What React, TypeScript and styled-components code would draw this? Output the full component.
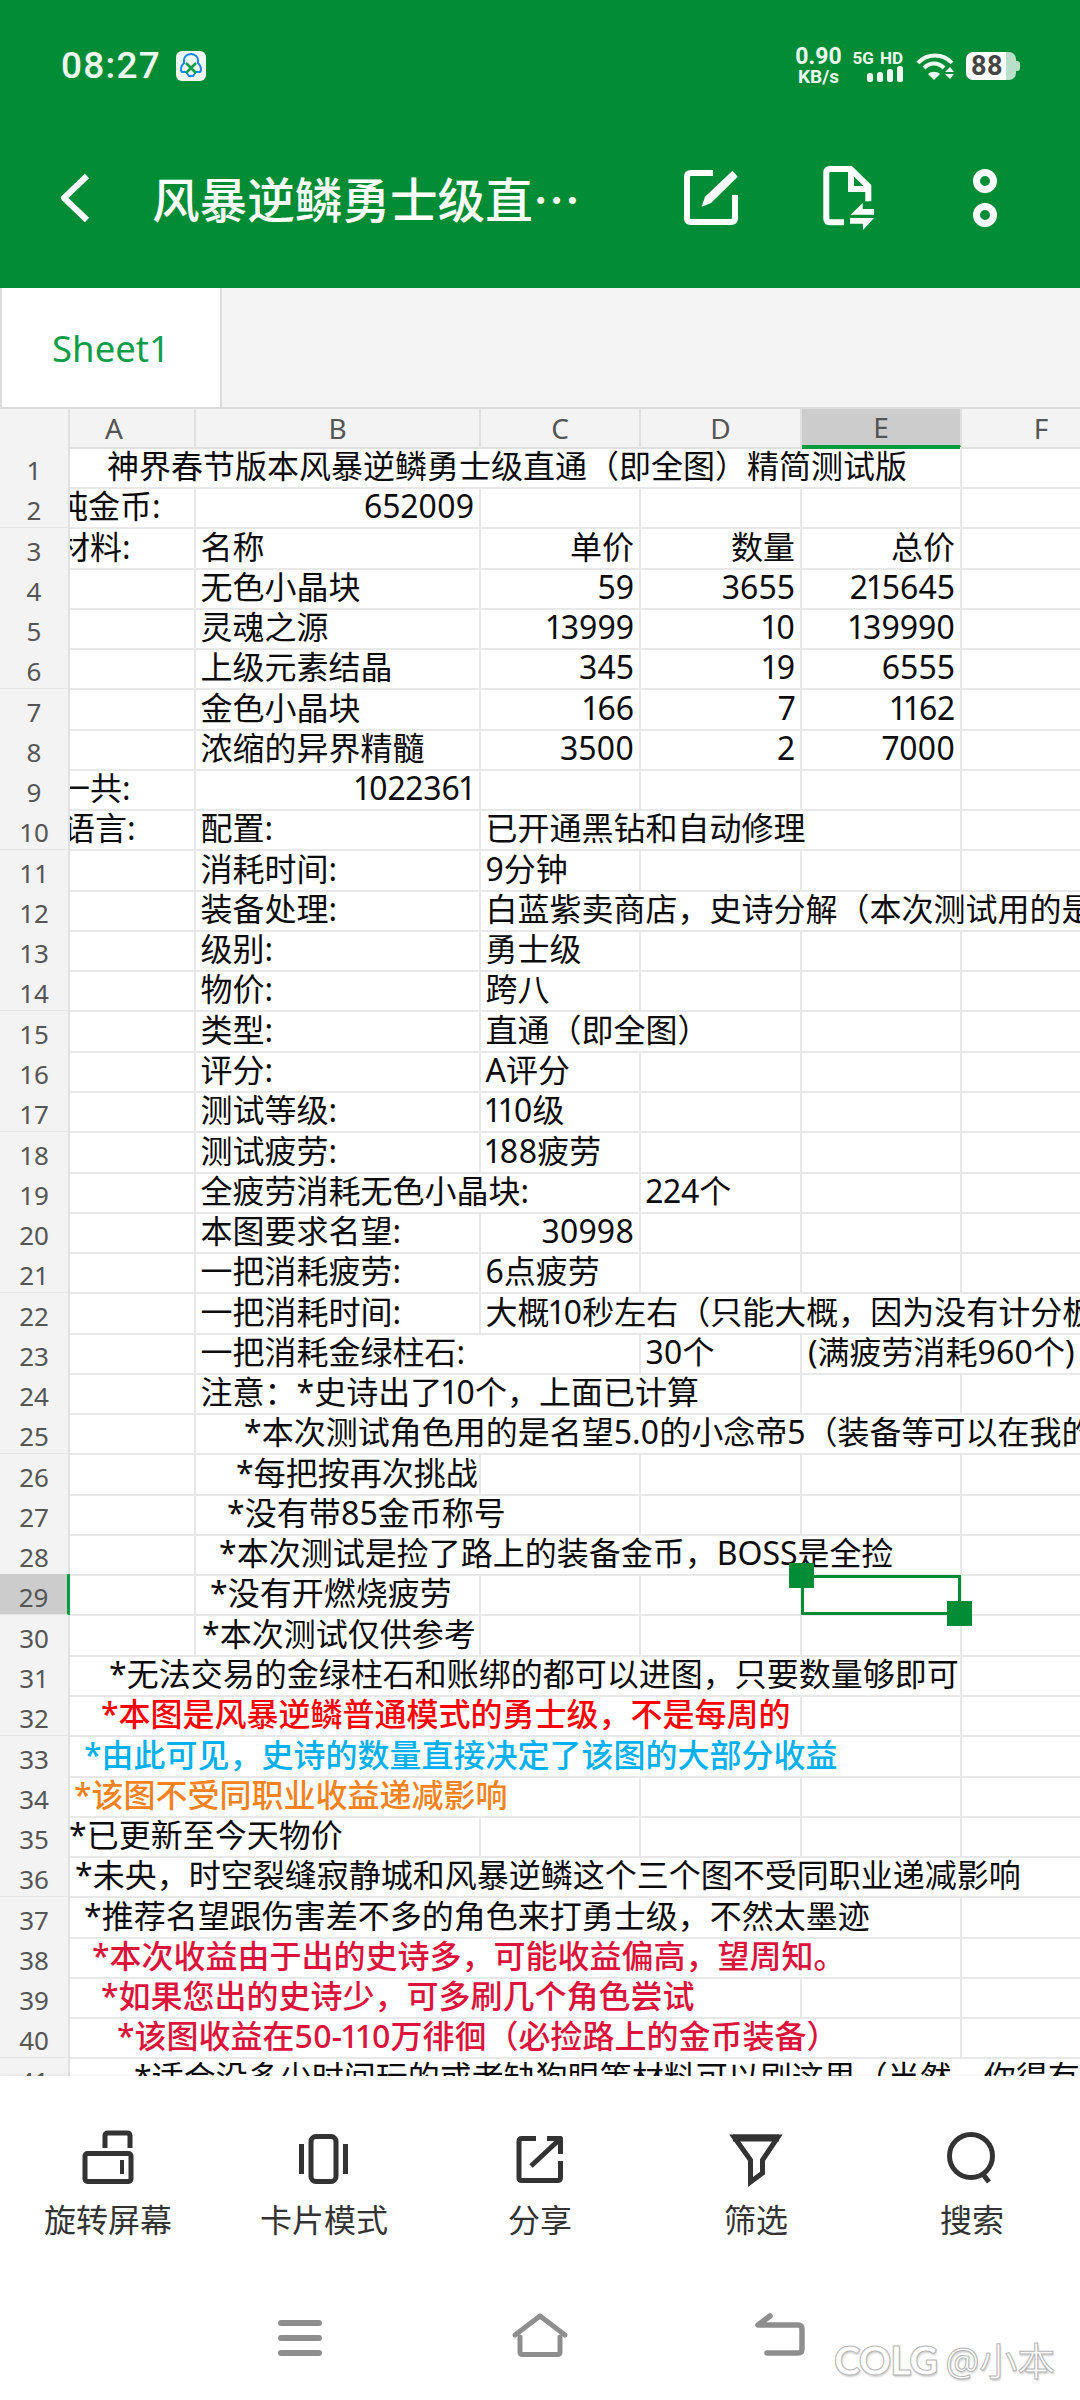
import styled, { createGlobalStyle } from "styled-components";

const GREEN = "#028c36";
const GRID = "#e8e8e8";
const CJK = `"Noto Sans", "Noto Sans CJK SC", sans-serif`;
const COLUMNS = "70px 126px 285px 160px 161px 160px 160px";

const GlobalStyle = createGlobalStyle`
  html, body {
    margin: 0;
    padding: 0;
    background: #fff;
  }
  * {
    box-sizing: border-box;
  }
`;

const Page = styled.div`
  display: flex;
  flex-direction: column;
  width: 1080px;
  height: 2400px;
  overflow: hidden;
  font-family: ${CJK};
  color: #111;
`;

const Header = styled.header`
  flex: none;
  height: 288px;
  background: ${GREEN};
  color: #fff;
`;

const StatusBar = styled.div`
  display: flex;
  align-items: center;
  height: 44px;
  margin-top: 44px;
  padding: 0 64px 0 61px;
  color: #ecf7f0;
  font-family: Roboto, sans-serif;
`;

const Clock = styled.span`
  font-size: 37px;
  font-weight: 500;
  letter-spacing: 1.2px;
  line-height: 44px;
`;

const AppBadge = styled.svg`
  margin-left: 15px;
`;

const StatusRight = styled.div`
  display: flex;
  align-items: center;
  margin-left: auto;
`;

const Speed = styled.div`
  display: flex;
  flex-direction: column;
  align-items: center;
  width: 47px;
  font-weight: 700;
`;

const SpeedValue = styled.span`
  font-size: 23px;
  line-height: 22px;
`;

const SpeedUnit = styled.span`
  font-size: 19px;
  line-height: 18px;
`;

const Network = styled.div`
  display: flex;
  flex-direction: column;
  align-items: flex-end;
  width: 49px;
  margin-left: 12px;
`;

const NetworkLabel = styled.span`
  font-size: 17px;
  font-weight: 700;
  line-height: 16px;
  word-spacing: 2px;
  white-space: nowrap;
`;

const WifiIcon = styled.svg`
  margin-left: 13px;
`;

const Battery = styled.div`
  position: relative;
  width: 50px;
  height: 28px;
  margin-left: 12px;
  border-radius: 7px;
  background: linear-gradient(90deg, #fff 80%, #b8e0c8 80%);
  color: #444;
  font-size: 27px;
  font-weight: 700;
  line-height: 28px;
  padding-left: 5px;
  letter-spacing: 0.5px;

  &::after {
    content: "";
    position: absolute;
    top: 9px;
    right: -4px;
    width: 4px;
    height: 10px;
    border-radius: 0 3px 3px 0;
    background: #b8e0c8;
  }
`;

const TitleBar = styled.div`
  display: flex;
  align-items: center;
  height: 68px;
  margin-top: 76px;
  padding: 0 27px 0 57px;
`;

const Title = styled.h1`
  margin: 0 0 0 59px;
  font-family: "Noto Sans CJK SC", sans-serif;
  font-size: 47.6px;
  font-weight: 500;
  line-height: 68px;
  white-space: nowrap;
`;

const TitleActions = styled.div`
  display: grid;
  grid-template-columns: repeat(3, 137px);
  justify-items: center;
  align-items: center;
  margin-left: auto;
`;

const TabBar = styled.div`
  flex: none;
  display: flex;
  height: 121px;
  background: #f4f4f4;
  border-bottom: 2px solid #dcdcdc;
`;

const SheetTab = styled.div`
  display: flex;
  align-items: center;
  justify-content: center;
  width: 222px;
  background: #fff;
  border-left: 2px solid #dcdcdc;
  border-right: 2px solid #dcdcdc;
  color: #0f9d4a;
  font-size: 36.5px;
`;

const Sheet = styled.div`
  position: relative;
  flex: 1;
  min-height: 0;
  overflow: hidden;
`;

const ColumnHeader = styled.div`
  display: grid;
  grid-template-columns: ${COLUMNS};
  height: 38px;
`;

const ColumnTitle = styled.div<{ $active?: boolean; $shift?: number }>`
  display: flex;
  align-items: center;
  justify-content: center;
  padding-right: ${(p) => p.$shift ?? 0}px;
  background: ${(p) => (p.$active ? "#cccccc" : "#f3f3f3")};
  border-right: 2px solid #e0e0e0;
  border-bottom: ${(p) => (p.$active ? `4px solid #049a3e` : "2px solid #e0e0e0")};
  color: #555;
  font-size: 28px;
  line-height: 36px;
`;

const SheetRow = styled.div`
  display: grid;
  grid-template-columns: ${COLUMNS};
  height: 40.27px;
`;

const RowNumber = styled.div<{ $active?: boolean }>`
  padding-top: 7px;
  background: ${(p) => (p.$active ? "#cccccc" : "#f3f3f3")};
  border-right: ${(p) => (p.$active ? `3px solid #049a3e` : "2px solid #e0e0e0")};
  border-bottom: 2px solid #e6e6e6;
  color: #555;
  font-size: 26px;
  line-height: 33px;
  text-align: center;
`;

const TONES = {
  black: "#0c0c0c",
  red: "#ff0000",
  blue: "#00b0f0",
  orange: "#f58220",
  crimson: "#dc143c",
};

type Tone = keyof typeof TONES;

const Cell = styled.div<{ $span: number; $indent: number; $right?: boolean; $tone: Tone }>`
  grid-column: span ${(p) => p.$span};
  overflow: hidden;
  padding-right: ${(p) => (p.$right ? 5 : 0)}px;
  border-right: 2px solid ${GRID};
  border-bottom: 2px solid ${GRID};
  color: ${(p) => TONES[p.$tone]};
  font-size: 32px;
  font-variant-numeric: proportional-nums;
  font-weight: ${(p) => (p.$tone === "black" ? 400 : 500)};
  line-height: 38px;
  text-align: ${(p) => (p.$right ? "right" : "left")};
  text-indent: ${(p) => (p.$right ? 0 : p.$indent)}px;
  white-space: pre;
`;

const Selection = styled.div`
  position: absolute;
  top: 1166px;
  left: 801px;
  width: 160px;
  height: 40px;
  border: 3px solid ${GREEN};
`;

const Handle = styled.span<{ $end?: boolean }>`
  position: absolute;
  width: 25px;
  height: 25px;
  background: ${GREEN};
  ${(p) => (p.$end ? "right: -14px; bottom: -14px;" : "left: -15px; top: -15px;")}
`;

const BottomPanel = styled.div`
  position: relative;
  flex: none;
  height: 324px;
  padding-top: 52px;
  background: #fff;
  box-shadow: 0 -1px 3px rgba(0, 0, 0, 0.06);
`;

const Toolbar = styled.div`
  display: grid;
  grid-template-columns: repeat(5, 216px);
`;

const ToolItem = styled.div`
  display: flex;
  flex-direction: column;
  align-items: center;
  color: #333;
`;

const ToolLabel = styled.span`
  margin-top: 8px;
  font-family: "Noto Sans CJK SC", sans-serif;
  font-size: 32px;
  line-height: 44px;
`;

const NavBar = styled.div`
  display: grid;
  grid-template-columns: repeat(3, 240px);
  justify-items: center;
  margin-top: 65px;
  padding-left: 180px;
`;

const Watermark = styled.div`
  position: absolute;
  left: 834px;
  bottom: 18px;
  display: flex;
  align-items: center;
  gap: 8px;
  color: #fff;
  font-size: 38px;
  line-height: 44px;
  -webkit-text-stroke: 1px #b5b5b5;
  text-shadow: 1px 2px 2px rgba(0, 0, 0, 0.18);
  white-space: nowrap;
`;

const WatermarkLogo = styled.span`
  font-family: Lato, sans-serif;
  font-size: 40px;
  font-weight: 900;
  letter-spacing: -1px;
`;

interface SheetCell {
  span: number;
  text?: string;
  indent?: number;
  right?: boolean;
  tone?: Tone;
}

const c = (span: number, text?: string, indent = 4.5, tone?: Tone): SheetCell => ({ span, text, indent, tone });
const n = (text: string): SheetCell => ({ span: 1, text, right: true });
const blank = c(1);

// one entry per row, columns not listed stay empty
const rows: SheetCell[][] = [
  [c(5, "神界春节版本风暴逆鳞勇士级直通（即全图）精简测试版", 37)],
  [c(1, "纯金币:", -14), n("652009")],
  [c(1, "材料:", -12), c(1, "名称"), n("单价"), n("数量"), n("总价")],
  [blank, c(1, "无色小晶块"), n("59"), n("3655"), n("215645")],
  [blank, c(1, "灵魂之源"), n("13999"), n("10"), n("139990")],
  [blank, c(1, "上级元素结晶"), n("345"), n("19"), n("6555")],
  [blank, c(1, "金色小晶块"), n("166"), n("7"), n("1162")],
  [blank, c(1, "浓缩的异界精髓"), n("3500"), n("2"), n("7000")],
  [c(1, "一共:", -12), n("1022361")],
  [c(1, "语言:", -7), c(1, "配置:"), c(3, "已开通黑钻和自动修理")],
  [blank, c(1, "消耗时间:"), c(1, "9分钟")],
  [blank, c(1, "装备处理:"), c(4, "白蓝紫卖商店，史诗分解（本次测试用的是分解）")],
  [blank, c(1, "级别:"), c(1, "勇士级")],
  [blank, c(1, "物价:"), c(1, "跨八")],
  [blank, c(1, "类型:"), c(2, "直通（即全图）")],
  [blank, c(1, "评分:"), c(1, "A评分")],
  [blank, c(1, "测试等级:"), c(1, "110级")],
  [blank, c(1, "测试疲劳:"), c(1, "188疲劳")],
  [blank, c(2, "全疲劳消耗无色小晶块:"), c(1, "224个")],
  [blank, c(1, "本图要求名望:"), n("30998")],
  [blank, c(1, "一把消耗疲劳:"), c(1, "6点疲劳")],
  [blank, c(1, "一把消耗时间:"), c(4, "大概10秒左右（只能大概，因为没有计分板）")],
  [blank, c(2, "一把消耗金绿柱石:"), c(1, "30个"), c(2, "(满疲劳消耗960个)", 6)],
  [blank, c(3, "注意：*史诗出了10个，上面已计算")],
  [blank, c(5, "*本次测试角色用的是名望5.0的小念帝5（装备等可以在我的帖子里看）", 48)],
  [blank, c(1, "*每把按再次挑战", 40)],
  [blank, c(2, "*没有带85金币称号", 31)],
  [blank, c(4, "*本次测试是捡了路上的装备金币，BOSS是全捡", 23)],
  [blank, c(1, "*没有开燃烧疲劳", 14)],
  [blank, c(1, "*本次测试仅供参考", 6)],
  [c(5, "*无法交易的金绿柱石和账绑的都可以进图，只要数量够即可", 39)],
  [c(4, "*本图是风暴逆鳞普通模式的勇士级，不是每周的", 31, "red")],
  [c(5, "*由此可见，史诗的数量直接决定了该图的大部分收益", 14, "blue")],
  [c(3, "*该图不受同职业收益递减影响", 4, "orange")],
  [c(2, "*已更新至今天物价", -1)],
  [c(6, "*未央，时空裂缝寂静城和风暴逆鳞这个三个图不受同职业递减影响", 5)],
  [c(5, "*推荐名望跟伤害差不多的角色来打勇士级，不然太墨迹", 14)],
  [c(5, "*本次收益由于出的史诗多，可能收益偏高，望周知。", 22, "crimson")],
  [c(4, "*如果您出的史诗少，可多刷几个角色尝试", 31, "crimson")],
  [c(5, "*该图收益在50-110万徘徊（必捡路上的金币装备）", 47, "crimson")],
  [c(6, "*适合没多少时间玩的或者缺狗眼等材料可以刷这里（当然，你得有", 64)],
];

const ACTIVE_ROW = 29;
const columnLetters = ["A", "B", "C", "D", "E", "F"];

const fillRow = (cells: SheetCell[]) => {
  const used = cells.reduce((sum, cell) => sum + cell.span, 0);
  const rest: SheetCell[] = Array.from({ length: Math.max(0, 6 - used) }, () => blank);
  return [...cells, ...rest];
};

const ICON = "#333";
const NAV = "#8e8e8e";

const tools = [
  {
    label: "旋转屏幕",
    icon: (
      <>
        <path d="M27 20V8q0-3 3-3h19q3 0 3 3v12" />
        <rect x="7" y="25.5" width="46" height="28" rx="2.5" />
        <path d="M44 32v14" strokeWidth="4" />
      </>
    ),
  },
  {
    label: "卡片模式",
    icon: (
      <>
        <rect x="17" y="8.5" width="25" height="45" rx="5" />
        <path d="M7.5 16v30M51.5 16v30" />
      </>
    ),
  },
  {
    label: "分享",
    icon: (
      <>
        <path d="M26 10.5H12q-3 0-3 3v36q0 3 3 3h35.5q3 0 3-3V33" />
        <path d="M21 38l29-27M37 10.5h13.5V26" />
      </>
    ),
  },
  {
    label: "筛选",
    icon: (
      <>
        <path d="M8 9h44L36.5 32v13L24.5 54V32z" strokeLinejoin="miter" />
        <path d="M7 10h46" strokeWidth="7" />
      </>
    ),
  },
  {
    label: "搜索",
    icon: (
      <>
        <circle cx="29" cy="28" r="21.5" />
        <path d="M40 45l7 9" />
      </>
    ),
  },
];

const App = () => {
  return (
    <Page>
      <GlobalStyle />
      <Header>
        <StatusBar>
          <Clock>08:27</Clock>
          <AppBadge width="30" height="30" viewBox="0 0 30 30">
            <rect width="30" height="30" rx="6" fill="#eef8f4" />
            <path d="M8 13V9a7 6 0 0 1 14 0v4" fill="none" stroke="#1a88f0" strokeWidth="2" />
            <path d="M8 12c-3 3-4 7-2 9h4l3 4h4l3-4h4c2-2 1-6-2-9" fill="none" stroke="#1a88f0" strokeWidth="2" />
            <path d="M10 12l10 10M20 12L10 22" stroke="#0f9d4a" strokeWidth="2.5" />
          </AppBadge>
          <StatusRight>
            <Speed>
              <SpeedValue>0.90</SpeedValue>
              <SpeedUnit>KB/s</SpeedUnit>
            </Speed>
            <Network>
              <NetworkLabel>5G HD</NetworkLabel>
              <svg width="36" height="16" viewBox="0 0 36 16" fill="#ecf7f0">
                <rect x="0" y="7" width="6" height="9" rx="2.5" />
                <rect x="10" y="6" width="6" height="10" rx="2.5" />
                <rect x="20" y="3" width="6" height="13" rx="2.5" />
                <rect x="30" y="0" width="6" height="16" rx="2.5" />
              </svg>
            </Network>
            <WifiIcon width="38" height="28" viewBox="0 0 38 28">
              <g fill="none" stroke="#ecf7f0" strokeWidth="4">
                <path d="M2 11C11 1 27 1 36 11" />
                <path d="M8 16c6-6 14-6 20 0" />
              </g>
              <path d="M18 28l-6-6c3-3 9-3 12 0z" fill="#ecf7f0" />
              <path d="M29 20l5-5 4 5zM29 22h9l-4 5z" fill="#ecf7f0" />
            </WifiIcon>
            <Battery>88</Battery>
          </StatusRight>
        </StatusBar>
        <TitleBar>
          <svg width="36" height="52" viewBox="0 0 36 52" fill="none" stroke="#fff" strokeWidth="6" strokeLinejoin="round">
            <path d="M30 4L7 26l23 22" />
          </svg>
          <Title>风暴逆鳞勇士级直…</Title>
          <TitleActions>
            <svg width="60" height="60" viewBox="0 0 60 60" fill="none" stroke="#fff" strokeWidth="6">
              <path d="M32 5H10q-4 0-4 4v41q0 4 4 4h40q4 0 4-4V27" />
              <path d="M20.7 38.7L24 28.7 51.6 2.7l5.1 6L30 35z" fill="#fff" stroke="none" />
            </svg>
            <svg width="60" height="68" viewBox="0 0 60 68" fill="none" stroke="#fff" strokeWidth="6">
              <path d="M26 58.3H12q-3.7 0-3.7-3.700V8.700q0-3.700 3.700-3.700h20.700L50.300 22.300v15" />
              <path d="M33 8v17h17" />
              <path d="M32.7 50.7L44.7 39v6H56v5.7zM32 54h24L45 66v-6.3H32z" fill="#fff" stroke="none" />
            </svg>
            <svg width="34" height="64" viewBox="0 0 34 64" fill="none" stroke="#fff" strokeWidth="7">
              <circle cx="17" cy="15" r="8.5" />
              <circle cx="17" cy="49" r="8.5" />
            </svg>
          </TitleActions>
        </TitleBar>
      </Header>

      <TabBar>
        <SheetTab>Sheet1</SheetTab>
      </TabBar>

      <Sheet>
        <ColumnHeader>
          <ColumnTitle />
          {columnLetters.map((letter) => (
            <ColumnTitle key={letter} $active={letter === "E"} $shift={letter === "A" ? 36 : 0}>
              {letter}
            </ColumnTitle>
          ))}
        </ColumnHeader>
        {rows.map((cells, index) => (
          <SheetRow key={index}>
            <RowNumber $active={index + 1 === ACTIVE_ROW}>{index + 1}</RowNumber>
            {fillRow(cells).map((cell, cellIndex) => (
              <Cell
                key={cellIndex}
                $span={cell.span}
                $indent={cell.indent ?? 4.5}
                $right={cell.right}
                $tone={cell.tone ?? "black"}
              >
                {cell.text}
              </Cell>
            ))}
          </SheetRow>
        ))}
        <Selection>
          <Handle />
          <Handle $end />
        </Selection>
      </Sheet>

      <BottomPanel>
        <Toolbar>
          {tools.map((tool) => (
            <ToolItem key={tool.label}>
              <svg width="60" height="60" viewBox="0 0 60 60" fill="none" stroke={ICON} strokeWidth="5" strokeLinejoin="round">
                {tool.icon}
              </svg>
              <ToolLabel>{tool.label}</ToolLabel>
            </ToolItem>
          ))}
        </Toolbar>
        <NavBar>
          <svg width="60" height="60" viewBox="0 0 60 60" fill={NAV}>
            <rect x="8" y="15" width="44" height="6" rx="3" />
            <rect x="8" y="30" width="44" height="6" rx="3" />
            <rect x="8" y="45" width="44" height="6" rx="3" />
          </svg>
          <svg width="60" height="60" viewBox="0 0 60 60" fill="none" stroke={NAV} strokeWidth="5" strokeLinecap="round" strokeLinejoin="round">
            <path d="M5 30L30 11l25 19" />
            <path d="M10 32v15q0 2.5 2.5 2.5h35q2.500 0 2.500-2.500V32" />
          </svg>
          <svg width="60" height="60" viewBox="0 0 60 60" fill="none" stroke={NAV} strokeWidth="5.5" strokeLinecap="round" strokeLinejoin="round">
            <path d="M20 11L8 20h40q4 0 4 4v20q0 4-4 4H17" />
          </svg>
        </NavBar>
        <Watermark>
          <WatermarkLogo>COLG</WatermarkLogo>
          <span>@小本</span>
        </Watermark>
      </BottomPanel>
    </Page>
  );
};

export default App;
